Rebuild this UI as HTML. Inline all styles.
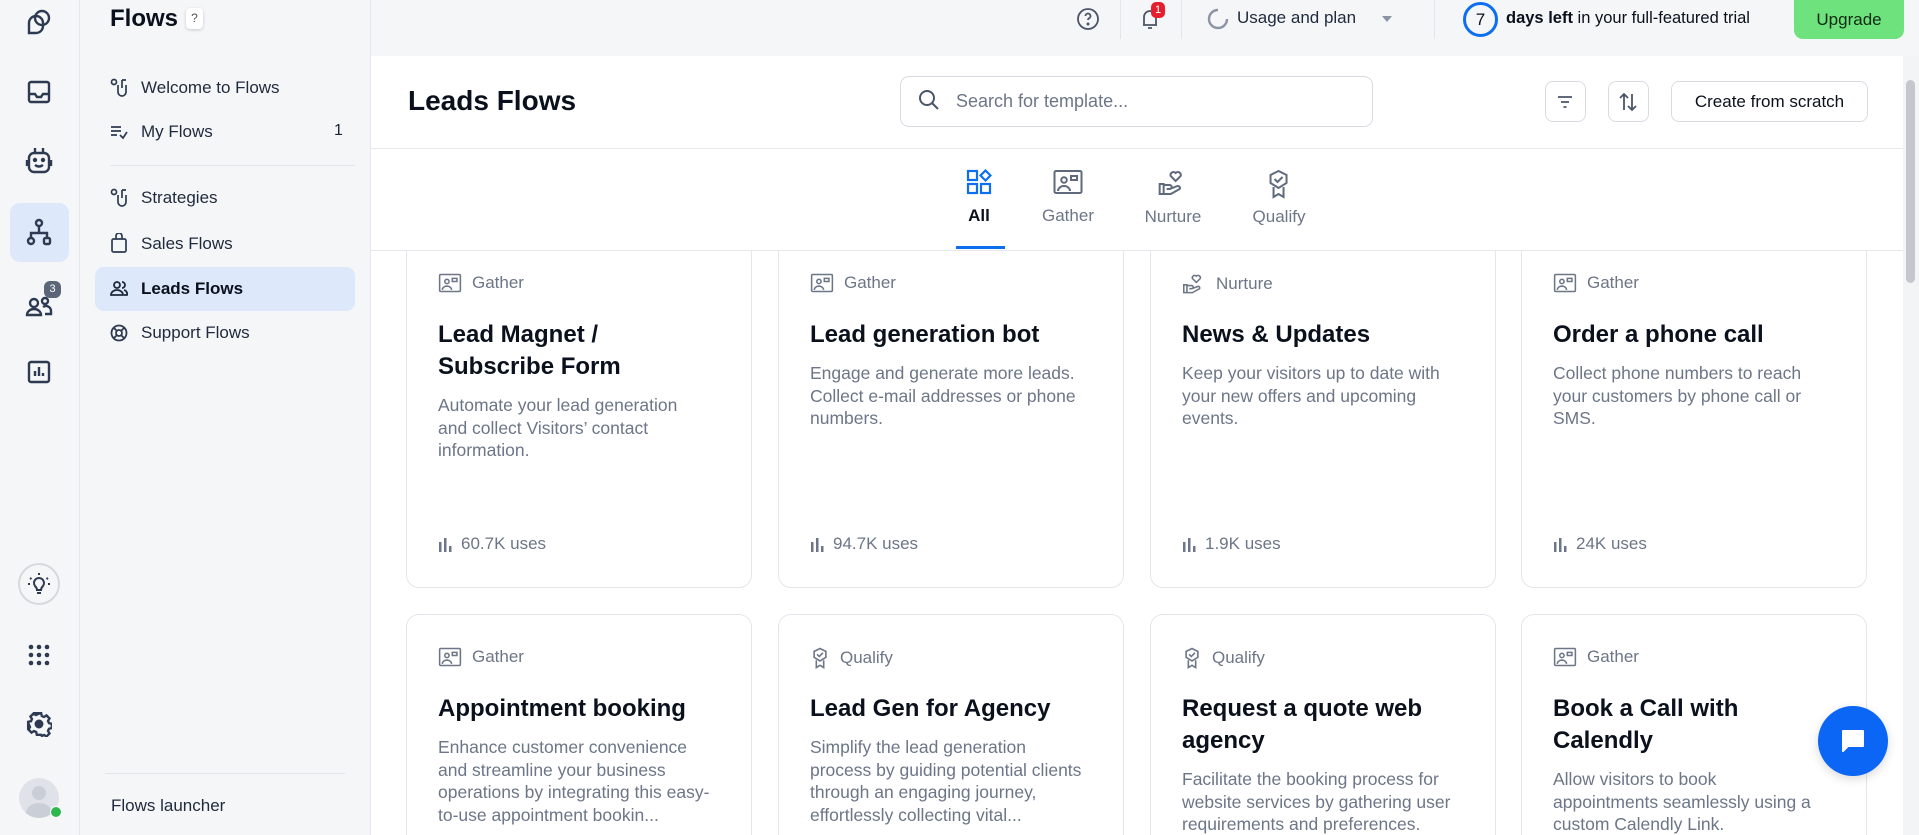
<!DOCTYPE html>
<html><head><meta charset="utf-8"><style>
*{box-sizing:border-box;margin:0;padding:0}
html,body{width:1919px;height:835px;overflow:hidden}
body{background:#f5f6f8;font-family:"Liberation Sans",sans-serif;color:#1b2536;position:relative}
.abs{position:absolute}
.rail{left:0;top:0;width:80px;height:835px;background:#f5f6f8;border-right:1px solid #e3e6ea}
.ri{position:absolute;left:39px;transform:translate(-50%,-50%)}
.side{left:80px;top:0;width:291px;height:835px}
.si{position:absolute;left:141px;font-size:17px;color:#1f2a3c}
.main{left:371px;top:56px;width:1532px;height:779px;background:#fff;overflow:hidden}
.card{position:absolute;width:346px;height:348px;border:1px solid #e3e6ea;border-radius:13px;background:#fff}
.tag{position:absolute;left:31px;top:32px;font-size:17px;color:#6c7687;display:flex;align-items:center;gap:10px}
.ttl{position:absolute;left:31px;top:78px;width:300px;font-size:24px;font-weight:bold;color:#0a111c;line-height:32px}
.dsc{position:absolute;left:31px;width:272px;font-size:17.5px;color:#6c7687;line-height:22.6px}
.use{position:absolute;left:31px;top:293px;font-size:17px;color:#6c7687;display:flex;align-items:center;gap:9px}
.tab{position:absolute;top:0;text-align:center;font-size:17px;color:#6c7687;transform:translateX(-50%)}
.btn{position:absolute;border:1px solid #d8dce2;border-radius:8px;background:#fff}
</style></head><body>
<div class="abs rail">
 <svg class="ri" style="top:22px" width="30" height="30" viewBox="0 0 30 30" fill="none" stroke="#2d3a52" stroke-width="2.4"><circle cx="18" cy="11" r="7"/><path d="M5 26V16a7 7 0 0 1 14 0v3a7 7 0 0 1-7 7z"/></svg>
 <svg class="ri" style="top:92px" width="26" height="26" viewBox="0 0 26 26" fill="none" stroke="#2d3a52" stroke-width="2.4"><rect x="3" y="3" width="20" height="20" rx="2"/><path d="M3 15h6l2 3h4l2-3h6"/></svg>
 <svg class="ri" style="top:161px" width="28" height="30" viewBox="0 0 28 30" fill="none" stroke="#2d3a52" stroke-width="2.4"><rect x="4" y="7" width="20" height="19" rx="5"/><path d="M10 2v4M18 2v4M2 14v6M26 14v6"/><circle cx="10" cy="14" r="1" fill="#2d3a52"/><circle cx="18" cy="14" r="1" fill="#2d3a52"/><path d="M10 19q4 3 8 0"/></svg>
 <div class="abs" style="left:10px;top:203px;width:59px;height:59px;border-radius:10px;background:#dde8fb"></div>
 <svg class="ri" style="top:232px" width="26" height="28" viewBox="0 0 26 28" fill="none" stroke="#2d3a52" stroke-width="2.4"><circle cx="13" cy="5" r="3"/><path d="M13 8v7M5 20v-5h16v5"/><rect x="2" y="20" width="6" height="6" rx="3"/><rect x="18" y="20" width="6" height="6" rx="1.5"/></svg>
 <svg class="ri" style="top:303px" width="28" height="28" viewBox="0 0 28 28" fill="none" stroke="#2d3a52" stroke-width="2.4"><circle cx="9" cy="14" r="4"/><path d="M2 26a7 6 0 0 1 14 0zM18 18a5 5 0 0 1 8 4v3h-6"/><circle cx="20" cy="12" r="3"/></svg>
 <div class="abs" style="left:44px;top:281px;width:17px;height:17px;border-radius:6px;background:#5b6678;color:#fff;font-size:11px;text-align:center;line-height:17px">3</div>
 <svg class="ri" style="top:372px" width="26" height="26" viewBox="0 0 26 26" fill="none" stroke="#2d3a52" stroke-width="2.4"><rect x="3" y="3" width="20" height="20" rx="2"/><path d="M9 17v-5M13 17V8M17 17v-3"/></svg>
 <div class="abs" style="left:18px;top:563px;width:42px;height:42px;border-radius:50%;border:2px solid #d6d9de;background:#f5f6f8"></div>
 <svg class="ri" style="top:584px" width="26" height="26" viewBox="0 0 26 26" fill="none" stroke="#2d3a52" stroke-width="2"><path d="M9 15a5 5 0 1 1 8 0q-2 2-2 4h-4q0-2-2-4zM11 22h4M13 2v2M4 7l1.5 1M22 7l-1.5 1M2 13h2M22 13h2"/></svg>
 <svg class="ri" style="top:655px" width="22" height="22" viewBox="0 0 22 22" fill="#2d3a52"><circle cx="3" cy="3" r="2.3"/><circle cx="11" cy="3" r="2.3"/><circle cx="19" cy="3" r="2.3"/><circle cx="3" cy="11" r="2.3"/><circle cx="11" cy="11" r="2.3"/><circle cx="19" cy="11" r="2.3"/><circle cx="3" cy="19" r="2.3"/><circle cx="11" cy="19" r="2.3"/><circle cx="19" cy="19" r="2.3"/></svg>
 <svg class="ri" style="top:724px" width="26" height="26" viewBox="0 0 24 24" fill="none" stroke="#2d3a52" stroke-width="2.2"><circle cx="12" cy="12" r="3" fill="#2d3a52"/><path d="M10 2h4l.6 2.6 2 .9 2.3-1.4 2.8 2.8-1.4 2.3.9 2 2.6.6v4l-2.6.6-.9 2 1.4 2.3-2.8 2.8-2.3-1.4-2 .9L14 22h-4l-.6-2.6-2-.9-2.3 1.4-2.8-2.8 1.4-2.3-.9-2L2 14v-4l2.6-.6.9-2-1.4-2.3 2.8-2.8 2.3 1.4 2-.9z"/></svg>
 <div class="abs" style="left:19px;top:778px;width:40px;height:40px;border-radius:50%;background:#dfe3e9;overflow:hidden"><div class="abs" style="left:13px;top:8px;width:14px;height:14px;border-radius:50%;background:#c9ced7"></div><div class="abs" style="left:7px;top:25px;width:26px;height:20px;border-radius:50%;background:#c9ced7"></div></div>
 <div class="abs" style="left:50px;top:806px;width:12px;height:12px;border-radius:50%;background:#2fb84f;border:1px solid #fff"></div>
</div>
<div class="abs side">
 <div class="abs" style="left:30px;top:5px;font-size:24px;font-weight:bold;color:#0a111c">Flows</div>
 <div class="abs" style="left:106px;top:8px;width:17px;height:21px;border-radius:4px;background:#fff;box-shadow:0 1px 3px rgba(0,0,0,.18);font-size:12px;color:#555;text-align:center;line-height:21px">?</div>
</div>
<div class="abs" style="left:95px;top:267px;width:260px;height:44px;border-radius:9px;background:#dde8fb"></div>
<svg class="abs" style="left:110px;top:78px" width="18" height="20" viewBox="0 0 18 20" fill="none" stroke="#2d3a52" stroke-width="1.7"><circle cx="4" cy="4" r="2.5"/><path d="M8 7v7a4 4 0 0 0 8 0V7M12 2v8M12 2h4"/></svg>
<div class="si" style="top:78px">Welcome to Flows</div>
<svg class="abs" style="left:110px;top:124px" width="18" height="16" viewBox="0 0 18 16" fill="none" stroke="#2d3a52" stroke-width="1.7"><path d="M1 3h10M1 7h10M1 11h6M10 11l3 3 4-6"/></svg>
<div class="si" style="top:122px">My Flows</div>
<div class="abs" style="left:334px;top:122px;font-size:16px">1</div>
<div class="abs" style="left:110px;top:165px;width:245px;height:1px;background:#e1e4e8"></div>
<svg class="abs" style="left:110px;top:188px" width="18" height="20" viewBox="0 0 18 20" fill="none" stroke="#2d3a52" stroke-width="1.7"><circle cx="4" cy="4" r="2.5"/><path d="M8 7v7a4 4 0 0 0 8 0V7M12 2v8M12 2h4"/></svg>
<div class="si" style="top:188px">Strategies</div>
<svg class="abs" style="left:111px;top:233px" width="16" height="20" viewBox="0 0 16 20" fill="none" stroke="#2d3a52" stroke-width="1.7"><rect x="1" y="6" width="14" height="13" rx="1.5"/><path d="M5 6V3a3 3 0 0 1 6 0v3"/></svg>
<div class="si" style="top:234px">Sales Flows</div>
<svg class="abs" style="left:110px;top:280px" width="18" height="16" viewBox="0 0 18 16" fill="none" stroke="#1f2a3c" stroke-width="1.8"><circle cx="7" cy="5" r="3"/><path d="M1 15a6 5 0 0 1 12 0zM12 2a3 3 0 0 1 0 6M14 10a4 4 0 0 1 3 5h-3"/></svg>
<div class="si" style="top:279px;font-weight:bold;color:#0a111c">Leads Flows</div>
<svg class="abs" style="left:110px;top:324px" width="18" height="18" viewBox="0 0 18 18" fill="none" stroke="#2d3a52" stroke-width="1.8"><circle cx="9" cy="9" r="7.5"/><circle cx="9" cy="9" r="3"/><path d="M4 4l3 3M14 4l-3 3M4 14l3-3M14 14l-3-3"/></svg>
<div class="si" style="top:323px">Support Flows</div>
<div class="abs" style="left:105px;top:773px;width:240px;height:1px;background:#e1e4e8"></div>
<div class="abs" style="left:111px;top:796px;font-size:17px;color:#1f2a3c">Flows launcher</div>
<div class="abs" style="left:370px;top:0;width:1px;height:835px;background:#e3e6ea"></div>

<svg class="abs" style="left:1076px;top:7px" width="24" height="24" viewBox="0 0 24 24" fill="none" stroke="#4a5568" stroke-width="1.8"><circle cx="12" cy="12" r="10"/><path d="M9.5 9a2.5 2.5 0 1 1 3.5 2.3c-.8.4-1 1-1 1.7"/><circle cx="12" cy="17" r=".6" fill="#4a5568"/></svg>
<div class="abs" style="left:1120px;top:0;width:1px;height:39px;background:#e3e6ea"></div>
<svg class="abs" style="left:1140px;top:7px" width="20" height="24" viewBox="0 0 20 24" fill="none" stroke="#4a5568" stroke-width="1.8"><path d="M4 18V10a6 6 0 0 1 12 0v8H3h14M8 21h4"/></svg>
<div class="abs" style="left:1151px;top:2px;width:14px;height:16px;border-radius:5px;background:#e5202e;color:#fff;font-size:11px;text-align:center;line-height:16px">1</div>
<div class="abs" style="left:1181px;top:0;width:1px;height:39px;background:#e3e6ea"></div>
<svg class="abs" style="left:1207px;top:8px" width="22" height="22" viewBox="0 0 22 22" fill="none" stroke="#8a94a4" stroke-width="2.4"><path d="M11 2a9 9 0 1 0 9 9" /></svg>
<div class="abs" style="left:1237px;top:8px;font-size:17px;color:#1f2a3c">Usage and plan</div>
<div class="abs" style="left:1382px;top:16px;width:0;height:0;border-left:5px solid transparent;border-right:5px solid transparent;border-top:6px solid #8a94a4"></div>
<div class="abs" style="left:1434px;top:0;width:1px;height:39px;background:#e3e6ea"></div>
<div class="abs" style="left:1463px;top:2px;width:35px;height:35px;border-radius:50%;border:3px solid #0e6ef0;font-size:17px;text-align:center;line-height:29px;color:#0a111c">7</div>
<div class="abs" style="left:1506px;top:9px;font-size:16.5px;color:#0a111c"><b>days left</b> in your full-featured trial</div>
<div class="abs" style="left:1794px;top:0;width:110px;height:39px;border-radius:0 0 9px 9px;background:#6ee27c;font-size:17px;color:#0f2a14;text-align:center;line-height:39px">Upgrade</div>

<div class="abs main">
 <div class="abs" style="left:37px;top:29px;font-size:28px;font-weight:bold;color:#0a111c">Leads Flows</div>
 <div class="btn" style="left:529px;top:20px;width:473px;height:51px;border-radius:9px"></div>
 <svg class="abs" style="left:546px;top:32px" width="24" height="24" viewBox="0 0 24 24" fill="none" stroke="#4a5568" stroke-width="2"><circle cx="10" cy="10" r="7"/><path d="M15 15l6 6"/></svg>
 <div class="abs" style="left:585px;top:35px;font-size:18px;color:#6c7687">Search for template...</div>
 <div class="btn" style="left:1174px;top:25px;width:41px;height:41px"></div>
 <svg class="abs" style="left:1184px;top:36px" width="20" height="20" viewBox="0 0 20 20" stroke="#4a5568" stroke-width="1.8"><path d="M3 5h14M6 10h8M8.5 15h3"/></svg>
 <div class="btn" style="left:1237px;top:25px;width:41px;height:41px"></div>
 <svg class="abs" style="left:1247px;top:35px" width="20" height="22" viewBox="0 0 20 22" fill="none" stroke="#4a5568" stroke-width="1.8"><path d="M6 19V3M2 7l4-4 4 4M14 3v16M10 15l4 4 4-4"/></svg>
 <div class="btn" style="left:1300px;top:25px;width:197px;height:41px;font-size:17px;color:#0a111c;text-align:center;line-height:39px">Create from scratch</div>
 <div class="abs" style="left:0;top:92px;width:1532px;height:1px;background:#e6e8eb"></div>
 <div class="abs" style="left:0;top:113px;width:1532px;height:80px">
  <div class="tab" style="left:608px;color:#0a111c;font-weight:bold">
   <svg width="26" height="26" viewBox="0 0 26 26" fill="none" stroke="#0e6ef0" stroke-width="2.2"><rect x="2" y="2" width="9" height="9"/><rect x="2" y="15" width="9" height="9"/><rect x="15" y="15" width="9" height="9"/><path d="M19.5 1.5l5 5-5 5-5-5z"/></svg>
   <div style="margin-top:6px">All</div></div>
  <div class="tab" style="left:697px">
   <svg width="30" height="26" viewBox="0 0 30 26" fill="none" stroke="#5f6b7d" stroke-width="2"><rect x="1.5" y="2" width="27" height="22" rx="1.5"/><circle cx="11" cy="11" r="2.8"/><path d="M5 22a6 5 0 0 1 12 0M18 7h6v4h-6z"/></svg>
   <div style="margin-top:6px">Gather</div></div>
  <div class="tab" style="left:802px">
   <svg width="30" height="28" viewBox="0 0 30 28" fill="none" stroke="#5f6b7d" stroke-width="2"><path d="M18 12l-5-5a3 3 0 0 1 5-3 3 3 0 0 1 5 3zM2 15h4v10H2zM6 16h6a2 2 0 0 1 0 4H9M12 20l8-3a2 2 0 0 1 2 3l-9 5H6"/></svg>
   <div style="margin-top:5px">Nurture</div></div>
  <div class="tab" style="left:908px">
   <svg width="26" height="30" viewBox="0 0 26 30" fill="none" stroke="#5f6b7d" stroke-width="2"><path d="M13 2l8 4v8l-8 5-8-5V6zM9 10l3 3 5-5M8 18v10l5-3 5 3V18"/></svg>
   <div style="margin-top:3px">Qualify</div></div>
 </div>
 <div class="abs" style="left:585px;top:190px;width:49px;height:3px;background:#0e6ef0"></div>
 <div class="abs" style="left:0;top:194px;width:1532px;height:1px;background:#e6e8eb"></div>
 <div class="abs" style="left:0;top:195px;width:1532px;height:584px;overflow:hidden">
  <div class="abs" style="left:0;top:-11px;width:1532px;height:590px">
  <div class="card" style="left:35px;top:0">
   <div class="tag"><svg width="24" height="20" viewBox="0 0 30 26" fill="none" stroke="#6c7687" stroke-width="2"><rect x="1.5" y="2" width="27" height="22" rx="1.5"/><circle cx="11" cy="11" r="2.8"/><path d="M5 22a6 5 0 0 1 12 0M18 7h6v4h-6z"/></svg>Gather</div>
   <div class="ttl">Lead Magnet /<br>Subscribe Form</div>
   <div class="dsc" style="top:153px">Automate your lead generation and collect Visitors’ contact information.</div>
   <div class="use"><svg width="14" height="16" viewBox="0 0 14 16" fill="#6c7687"><rect x="1" y="6" width="2.5" height="10"/><rect x="6" y="2" width="2.5" height="14"/><rect x="11" y="10" width="2.5" height="6"/></svg>60.7K uses</div>
  </div>
  <div class="card" style="left:407px;top:0">
   <div class="tag"><svg width="24" height="20" viewBox="0 0 30 26" fill="none" stroke="#6c7687" stroke-width="2"><rect x="1.5" y="2" width="27" height="22" rx="1.5"/><circle cx="11" cy="11" r="2.8"/><path d="M5 22a6 5 0 0 1 12 0M18 7h6v4h-6z"/></svg>Gather</div>
   <div class="ttl">Lead generation bot</div>
   <div class="dsc" style="top:121px">Engage and generate more leads. Collect e-mail addresses or phone numbers.</div>
   <div class="use"><svg width="14" height="16" viewBox="0 0 14 16" fill="#6c7687"><rect x="1" y="6" width="2.5" height="10"/><rect x="6" y="2" width="2.5" height="14"/><rect x="11" y="10" width="2.5" height="6"/></svg>94.7K uses</div>
  </div>
  <div class="card" style="left:779px;top:0">
   <div class="tag"><svg width="24" height="22" viewBox="0 0 30 28" fill="none" stroke="#6c7687" stroke-width="2"><path d="M18 12l-5-5a3 3 0 0 1 5-3 3 3 0 0 1 5 3zM2 15h4v10H2zM6 16h6a2 2 0 0 1 0 4H9M12 20l8-3a2 2 0 0 1 2 3l-9 5H6"/></svg>Nurture</div>
   <div class="ttl">News &amp; Updates</div>
   <div class="dsc" style="top:121px">Keep your visitors up to date with your new offers and upcoming events.</div>
   <div class="use"><svg width="14" height="16" viewBox="0 0 14 16" fill="#6c7687"><rect x="1" y="6" width="2.5" height="10"/><rect x="6" y="2" width="2.5" height="14"/><rect x="11" y="10" width="2.5" height="6"/></svg>1.9K uses</div>
  </div>
  <div class="card" style="left:1150px;top:0">
   <div class="tag"><svg width="24" height="20" viewBox="0 0 30 26" fill="none" stroke="#6c7687" stroke-width="2"><rect x="1.5" y="2" width="27" height="22" rx="1.5"/><circle cx="11" cy="11" r="2.8"/><path d="M5 22a6 5 0 0 1 12 0M18 7h6v4h-6z"/></svg>Gather</div>
   <div class="ttl">Order a phone call</div>
   <div class="dsc" style="top:121px">Collect phone numbers to reach your customers by phone call or SMS.</div>
   <div class="use"><svg width="14" height="16" viewBox="0 0 14 16" fill="#6c7687"><rect x="1" y="6" width="2.5" height="10"/><rect x="6" y="2" width="2.5" height="14"/><rect x="11" y="10" width="2.5" height="6"/></svg>24K uses</div>
  </div>
  <div class="card" style="left:35px;top:374px">
   <div class="tag"><svg width="24" height="20" viewBox="0 0 30 26" fill="none" stroke="#6c7687" stroke-width="2"><rect x="1.5" y="2" width="27" height="22" rx="1.5"/><circle cx="11" cy="11" r="2.8"/><path d="M5 22a6 5 0 0 1 12 0M18 7h6v4h-6z"/></svg>Gather</div>
   <div class="ttl">Appointment booking</div>
   <div class="dsc" style="top:121px">Enhance customer convenience and streamline your business operations by integrating this easy-to-use appointment bookin...</div>
  </div>
  <div class="card" style="left:407px;top:374px">
   <div class="tag"><svg width="20" height="22" viewBox="0 0 26 30" fill="none" stroke="#6c7687" stroke-width="2.2"><path d="M13 2l8 4v8l-8 5-8-5V6zM9 10l3 3 5-5M8 18v10l5-3 5 3V18"/></svg>Qualify</div>
   <div class="ttl">Lead Gen for Agency</div>
   <div class="dsc" style="top:121px">Simplify the lead generation process by guiding potential clients through an engaging journey, effortlessly collecting vital...</div>
  </div>
  <div class="card" style="left:779px;top:374px">
   <div class="tag"><svg width="20" height="22" viewBox="0 0 26 30" fill="none" stroke="#6c7687" stroke-width="2.2"><path d="M13 2l8 4v8l-8 5-8-5V6zM9 10l3 3 5-5M8 18v10l5-3 5 3V18"/></svg>Qualify</div>
   <div class="ttl">Request a quote web<br>agency</div>
   <div class="dsc" style="top:153px">Facilitate the booking process for website services by gathering user requirements and preferences.</div>
  </div>
  <div class="card" style="left:1150px;top:374px">
   <div class="tag"><svg width="24" height="20" viewBox="0 0 30 26" fill="none" stroke="#6c7687" stroke-width="2"><rect x="1.5" y="2" width="27" height="22" rx="1.5"/><circle cx="11" cy="11" r="2.8"/><path d="M5 22a6 5 0 0 1 12 0M18 7h6v4h-6z"/></svg>Gather</div>
   <div class="ttl">Book a Call with<br>Calendly</div>
   <div class="dsc" style="top:153px">Allow visitors to book appointments seamlessly using a custom Calendly Link.</div>
  </div>
  </div>
 </div>
</div>
<div class="abs" style="left:1903px;top:56px;width:16px;height:779px;background:#f3f4f6"></div>
<div class="abs" style="left:1906px;top:80px;width:9px;height:203px;border-radius:5px;background:#c4c8ce"></div>
<div class="abs" style="left:1818px;top:706px;width:70px;height:70px;border-radius:50%;background:#0b66f5;box-shadow:0 3px 10px rgba(0,0,0,.15)"></div>
<svg class="abs" style="left:1840px;top:728px" width="26" height="26" viewBox="0 0 26 26"><path d="M3 3h20v15H8l-5 5z" fill="#fff" stroke="#fff" stroke-linejoin="round" stroke-width="2"/></svg>
</body></html>
